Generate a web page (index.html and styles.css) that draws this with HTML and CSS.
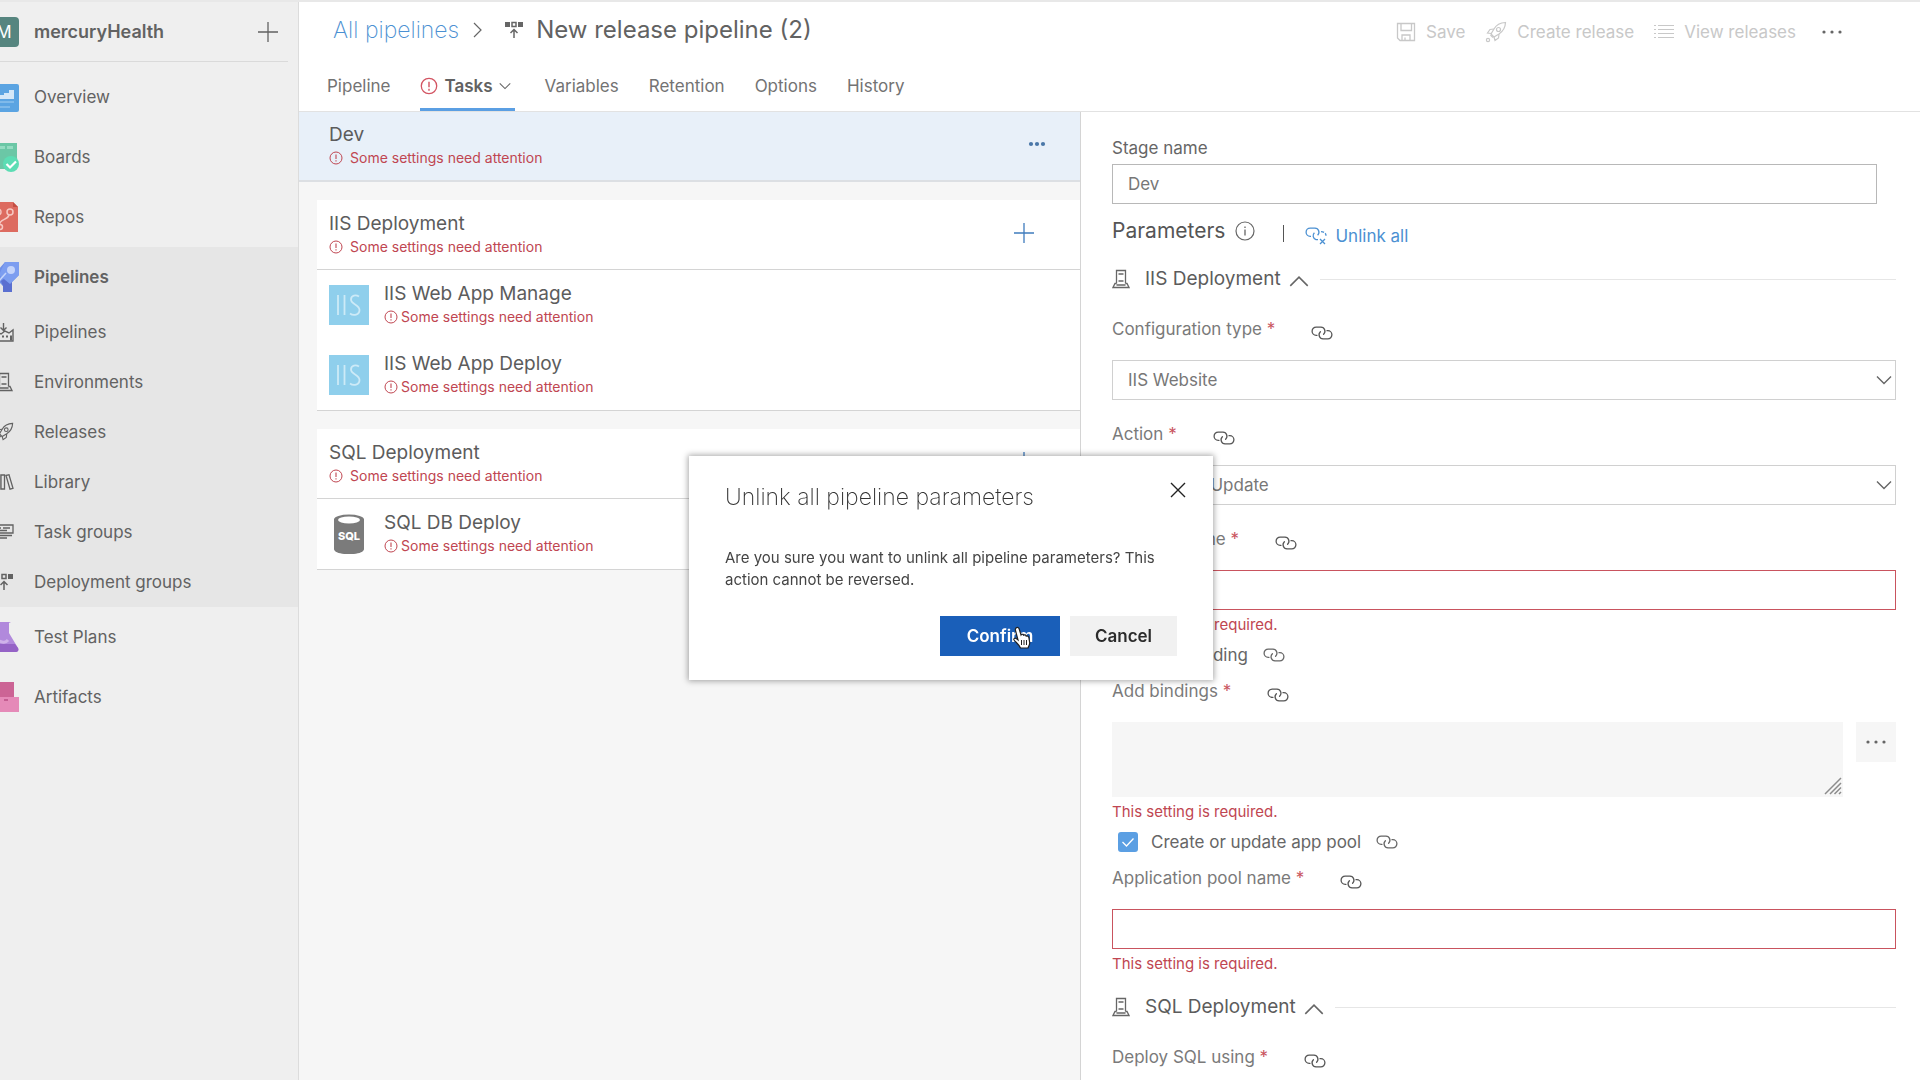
FILE: index.html
```html
<!DOCTYPE html>
<html lang="en">
<head>
<meta charset="utf-8">
<title>New release pipeline (2) - Pipelines</title>
<link rel="stylesheet" href="styles.css">
</head>
<body>
<svg class="defs" aria-hidden="true">
  <symbol id="alert" viewBox="0 0 14 14"><circle cx="7" cy="7" r="6" fill="none" stroke="currentColor"/><path d="M7 3.6v4.4M7 9.2v1.4" stroke="currentColor" stroke-width="1.1"/></symbol>
  <symbol id="link" viewBox="0 0 22 14"><g fill="none" stroke="currentColor" stroke-width="1.3" stroke-linecap="round"><path d="M6 9.3H5.2A4.1 4.1 0 0 1 5.2 1.1H10A4.1 4.1 0 0 1 12.6 8.2"/><path d="M16 4.7h.8a4.1 4.1 0 0 1 0 8.2H12A4.1 4.1 0 0 1 9.4 5.8"/></g></symbol>
  <symbol id="plus" viewBox="0 0 22 22"><path d="M11 1v20M1 11h20" stroke="currentColor" stroke-width="1.3"/></symbol>
  <symbol id="dots" viewBox="0 0 20 6"><circle cx="2" cy="3" r="1.6"/><circle cx="10" cy="3" r="1.6"/><circle cx="18" cy="3" r="1.6"/></symbol>
  <symbol id="dots-bold" viewBox="0 0 18 6"><circle cx="3" cy="3" r="2.1"/><circle cx="9" cy="3" r="2.1"/><circle cx="15" cy="3" r="2.1"/></symbol>
  <symbol id="down" viewBox="0 0 16 10"><path d="M1 1.5l7 7 7-7" fill="none" stroke="currentColor" stroke-width="1.4"/></symbol>
  <symbol id="up" viewBox="0 0 18 11"><path d="M1 10l8-8 8 8" fill="none" stroke="currentColor" stroke-width="1.4"/></symbol>
  <symbol id="server" viewBox="0 0 18 20"><path d="M4.5 14.5v-13h9v13M4.5 14.5H3l-2 4h16l-2-4h-1.5M4.5 16h9M6.5 5h5M6.5 12h5" fill="none" stroke="currentColor" stroke-width="1.3"/></symbol>
  <symbol id="rocket" viewBox="0 0 22 22"><g fill="none" stroke="currentColor" stroke-width="1.2"><path d="M20.5 1.5c-5 .2-9 2-11.5 6.500L6 13l3 3 5-3c4.500-3 6.300-6.500 6.500-11.500z"/><circle cx="13.500" cy="8.500" r="2"/><path d="M9 8L5 8.500 2.500 12 6.500 12.500M14 13l-.5 4L10 19.500 9 16M5.500 14l2.500 2.500"/><circle cx="3" cy="19" r="1.600"/></g></symbol>
  <symbol id="group" viewBox="0 0 20 20"><path d="M1 2h5v5H1zM14 2h5v5h-5z" fill="currentColor"/><path d="M8 2.600h4v3.800H8zM10 18V9.500M6.500 13l3.500-3.500 3.500 3.500" fill="none" stroke="currentColor" stroke-width="1.500"/></symbol>
  <symbol id="iis" viewBox="0 0 40 40"><path fill="#8fcfec" d="M0 0h40v40H0z"/><path d="M9 10v20M15.500 10v20M30 11.500c-3-2-8-1.500-8 3 0 5 8.500 5 8.500 10.500 0 5-6 6-9.500 3.500" fill="none" stroke="#cdeaf7" stroke-width="1.800"/></symbol>
</svg>
<div class="app">
  <nav class="sidebar" aria-label="Project">
    <div class="project">
      <span class="project-badge">M</span>
      <strong>mercuryHealth</strong>
      <button class="icon-button" aria-label="New"><svg width="22" height="22"><use href="#plus"/></svg></button>
    </div>
    <a class="nav-item" href="#"><svg width="30" height="30" viewBox="0 0 30 30"><rect y="2" width="30" height="28" rx="2" fill="#5ba4e2"/><path d="M5 17v-4h10v-2h5V8h5v9z" fill="#d5e8f8"/><path d="M5 20h20M5 25h16" stroke="#a5cff1"/></svg>Overview</a>
    <a class="nav-item" href="#"><svg width="30" height="30" viewBox="0 0 30 30"><path d="M0 1h28v26H0z" fill="#6bc7a6"/><path d="M4 4h5v4H4zM11 4h5v3h-5zM18 4h6v3h-6z" fill="#94dcc2"/><circle cx="22" cy="22" r="8" fill="#5cddb4"/><path d="M17.500 22l3.500 3.500 6-6" fill="none" stroke="#fff" stroke-width="2.200"/></svg>Boards</a>
    <a class="nav-item" href="#"><svg width="30" height="30" viewBox="0 0 30 30"><path d="M0 0h24l5 5v25H0z" fill="#dd6b60"/><path d="M24 0l5 5h-5z" fill="#c44e43"/><g fill="none" stroke="#f6c8c2" stroke-width="1.500"><circle cx="21" cy="10" r="3"/><circle cx="11" cy="25" r="2.500"/><circle cx="9" cy="10" r="3"/><path d="M20 13c-1 5-9 4-9.500 9.500"/></g></svg>Repos</a>
    <div class="nav-group">
      <a class="nav-item current" href="#"><svg width="30" height="30" viewBox="0 0 30 30"><path d="M16 0h14v13l-7 7v10h-9v-6l-8-8H0V8h9z" fill="#6f8fe8"/><path d="M12 19l11-7v18h-9v-6z" fill="#5a6fd0"/><path d="M16 0h14v13l-9 9-11-9z" fill="#7c9df0"/><circle cx="22" cy="8" r="4" fill="#c4d4fb"/><path d="M9 20l8-9" stroke="#c4d4fb" stroke-width="1.500"/></svg>Pipelines</a>
      <a class="nav-item sub" href="#"><svg width="20" height="20" viewBox="0 0 20 20"><path d="M2 10v9h17V8l-4 3-4-2-4 3zM9.500 1v7M6.500 5.500l3 3 3-3" fill="none" stroke="currentColor" stroke-width="1.400"/><path d="M4 13.500h2v2H4zM8 13.500h2v2H8zM12 13.500h2v2h-2zM16 13.500h2v5h-2z" fill="currentColor"/></svg>Pipelines</a>
      <a class="nav-item sub" href="#"><svg width="20" height="20"><use href="#server"/></svg>Environments</a>
      <a class="nav-item sub" href="#"><svg width="20" height="20"><use href="#rocket"/></svg>Releases</a>
      <a class="nav-item sub" href="#"><svg width="20" height="20" viewBox="0 0 20 20"><path d="M2 3h3.500v14H2zM7 3h3.500v14H7zM12 3.500l3-.8 4 13.600-3 .8z" fill="none" stroke="currentColor" stroke-width="1.300"/></svg>Library</a>
      <a class="nav-item sub" href="#"><svg width="20" height="20" viewBox="0 0 20 20"><path d="M1 3h18v8H1zM4 6h3M9 6h7M4 8.500h9M4 13.500h14M4 16h9" fill="none" stroke="currentColor" stroke-width="1.300"/></svg>Task groups</a>
      <a class="nav-item sub" href="#"><svg width="20" height="20"><use href="#group"/></svg>Deployment groups</a>
    </div>
    <a class="nav-item" href="#"><svg width="30" height="30" viewBox="0 0 30 30"><path d="M9 0h13l-2 1v10l9 15c1 2 0 4-2 4H3c-2 0-3-2-2-4l8-15z" fill="#b189dc"/><path d="M4 22h22l3 4c1 2 0 4-2 4H3c-2 0-3-2-2-4z" fill="#9563c6"/><path d="M6 20c5-4 8 4 13-2" fill="none" stroke="#cfb2ea" stroke-width="3"/></svg>Test Plans</a>
    <a class="nav-item" href="#"><svg width="30" height="30" viewBox="0 0 30 30"><path d="M4 0h21v15H4z" fill="#cc6495"/><path d="M0 15h30v15H0z" fill="#e58ab8"/><path d="M15 18h4" stroke="#b84e84" stroke-width="1.500"/></svg>Artifacts</a>
  </nav>
  <div class="main">
    <header class="page-header">
      <div class="title-row">
        <a class="crumb" href="#">All pipelines</a>
        <svg class="crumb-sep" width="10" height="18" viewBox="0 0 10 18"><path d="M1 2l7 7-7 7" fill="none" stroke="currentColor" stroke-width="1.200"/></svg>
        <svg class="title-icon" width="20" height="20"><use href="#group"/></svg>
        <h1>New release pipeline (2)</h1>
        <div class="toolbar">
          <button disabled><svg width="20" height="20" viewBox="0 0 20 20"><path d="M1.500 1.500h17v17H4l-2.500-2.500zM5 1.500v7h10.500v-7M6 18.500V13h8v5.500M9 15.500v3" fill="none" stroke="currentColor" stroke-width="1.300"/></svg>Save</button>
          <button disabled><svg width="22" height="22"><use href="#rocket"/></svg>Create release</button>
          <button disabled><svg width="20" height="16" viewBox="0 0 20 16"><path d="M4 1.500h16M4 5.500h16M4 9.500h16M4 13.500h16M0 1.500h2M0 5.500h2M0 9.500h2M0 13.500h2" stroke="currentColor"/></svg>View releases</button>
          <button class="more" aria-label="More actions"><svg width="20" height="6"><use href="#dots"/></svg></button>
        </div>
      </div>
      <nav class="tabs" aria-label="Pipeline sections">
        <a href="#">Pipeline</a>
        <a class="active" href="#"><svg class="alert" width="18" height="18"><use href="#alert"/></svg>Tasks<svg width="12" height="8"><use href="#down"/></svg></a>
        <a href="#">Variables</a>
        <a href="#">Retention</a>
        <a href="#">Options</a>
        <a href="#">History</a>
      </nav>
    </header>
    <div class="panes">
      <section class="tasks" aria-label="Tasks">
        <div class="stage">
          <div><h2>Dev</h2><p class="warn"><svg width="14" height="14"><use href="#alert"/></svg>Some settings need attention</p></div>
          <button class="icon-button stage-more" aria-label="Stage actions"><svg width="18" height="6"><use href="#dots-bold"/></svg></button>
        </div>
        <div class="card">
          <div class="card-head">
            <div><h2>IIS Deployment</h2><p class="warn"><svg width="14" height="14"><use href="#alert"/></svg>Some settings need attention</p></div>
            <button class="icon-button add" aria-label="Add a task to IIS Deployment"><svg width="22" height="22"><use href="#plus"/></svg></button>
          </div>
          <div class="task"><svg width="40" height="40"><use href="#iis"/></svg><div><h3>IIS Web App Manage</h3><p class="warn tight"><svg width="14" height="14"><use href="#alert"/></svg>Some settings need attention</p></div></div>
          <div class="task"><svg width="40" height="40"><use href="#iis"/></svg><div><h3>IIS Web App Deploy</h3><p class="warn tight"><svg width="14" height="14"><use href="#alert"/></svg>Some settings need attention</p></div></div>
        </div>
        <div class="card">
          <div class="card-head">
            <div><h2>SQL Deployment</h2><p class="warn"><svg width="14" height="14"><use href="#alert"/></svg>Some settings need attention</p></div>
            <button class="icon-button add" aria-label="Add a task to SQL Deployment"><svg width="22" height="22"><use href="#plus"/></svg></button>
          </div>
          <div class="task"><svg width="40" height="40" viewBox="0 0 40 40"><path d="M5 5v30c0 7 30 7 30 0V5z" fill="#7b7b7b"/><ellipse cx="20" cy="5.500" rx="15" ry="5" fill="#7b7b7b"/><ellipse cx="20" cy="6" rx="11" ry="3.400" fill="#fff"/><text x="20" y="26" text-anchor="middle" class="sql-text">SQL</text></svg><div><h3>SQL DB Deploy</h3><p class="warn tight"><svg width="14" height="14"><use href="#alert"/></svg>Some settings need attention</p></div></div>
        </div>
      </section>
      <form class="details">
        <label class="stage-label" for="stage">Stage name</label>
        <input class="control stage-input" id="stage" type="text" value="Dev">
        <div class="params">
          <h2>Parameters</h2>
          <svg width="20" height="20" viewBox="0 0 20 20"><circle cx="10" cy="10" r="9" fill="none" stroke="currentColor" stroke-width="1.200"/><path d="M10 8.500v6M10 5.500v1.500" stroke="currentColor" stroke-width="1.300"/></svg>
          <span class="bar"></span>
          <a class="unlink" href="#"><svg width="22" height="18" viewBox="0 0 22 18"><g fill="none" stroke="currentColor" stroke-width="1.300"><path d="M6 9.300h-.8a4.100 4.100 0 0 1 0-8.200H10a4.100 4.100 0 0 1 2.600 7.100"/><path d="M9.400 5.800A4.100 4.100 0 0 0 11 12.700h2" /><path d="M16 4.700c3 0 5 1.500 5 4" stroke-dasharray="3 1.500"/><path d="M15 12l5 5M20 12l-5 5"/></g></svg>Unlink all</a>
        </div>
        <div class="section"><svg width="18" height="20"><use href="#server"/></svg><h2>IIS Deployment</h2><svg class="up" width="20" height="12"><use href="#up"/></svg><hr></div>
        <div class="field">
          <div class="label"><label for="ctype">Configuration type <b>*</b></label><svg width="22" height="14"><use href="#link"/></svg></div>
          <div class="select"><select class="control" id="ctype"><option>IIS Website</option></select><svg width="16" height="10"><use href="#down"/></svg></div>
        </div>
        <div class="field">
          <div class="label"><label for="action">Action <b>*</b></label><svg width="22" height="14"><use href="#link"/></svg></div>
          <div class="select"><select class="control" id="action"><option>Create Or Update</option></select><svg width="16" height="10"><use href="#down"/></svg></div>
        </div>
        <div class="field">
          <div class="label"><label for="site">Website name <b>*</b></label><svg width="22" height="14"><use href="#link"/></svg></div>
          <input class="control invalid" id="site" type="text">
        </div>
        <p class="error">This setting is required.</p>
        <div class="check"><input type="checkbox" id="addb" checked><label for="addb">Add binding</label><svg width="22" height="14"><use href="#link"/></svg></div>
        <div class="field near">
          <div class="label"><label for="bind">Add bindings <b>*</b></label><svg width="22" height="14"><use href="#link"/></svg></div>
          <div class="area-row">
            <div class="area"><textarea id="bind"></textarea><svg width="18" height="18" viewBox="0 0 18 18"><path d="M1 17L17 1M6 17L17 6M10.500 17l6.500-6.500M15 17l2-2" stroke="#8c8c8c" stroke-width="1.500"/></svg></div>
            <button type="button" class="browse" aria-label="Edit bindings"><svg width="20" height="6"><use href="#dots"/></svg></button>
          </div>
        </div>
        <p class="error">This setting is required.</p>
        <div class="check"><input type="checkbox" id="pool" checked><label for="pool">Create or update app pool</label><svg width="22" height="14"><use href="#link"/></svg></div>
        <div class="field near">
          <div class="label"><label for="poolname">Application pool name <b>*</b></label><svg width="22" height="14"><use href="#link"/></svg></div>
          <input class="control invalid" id="poolname" type="text">
        </div>
        <p class="error">This setting is required.</p>
        <div class="section"><svg width="18" height="20"><use href="#server"/></svg><h2>SQL Deployment</h2><svg class="up" width="20" height="12"><use href="#up"/></svg><hr></div>
        <div class="field">
          <div class="label"><label for="sqlusing">Deploy SQL using <b>*</b></label><svg width="22" height="14"><use href="#link"/></svg></div>
          <div class="select"><select class="control" id="sqlusing"><option>Sql Dacpac File</option></select><svg width="16" height="10"><use href="#down"/></svg></div>
        </div>
      </form>
    </div>
  </div>
</div>
<div class="overlay">
  <div class="dialog" role="dialog" aria-modal="true" aria-labelledby="dlg-title">
    <div class="dialog-head"><h2 id="dlg-title">Unlink all pipeline parameters</h2><button class="icon-button" aria-label="Close"><svg width="16" height="16" viewBox="0 0 16 16"><path d="M1 1l14 14M15 1L1 15" stroke="#222" stroke-width="1.400"/></svg></button></div>
    <p>Are you sure you want to unlink all pipeline parameters? This action cannot be reversed.</p>
    <div class="dialog-actions">
      <button class="primary">Confirm<svg class="pointer" width="20" height="24" viewBox="0 0 20 24"><path d="M4 2c1.500-1.300 2.800-.3 3.200 1L9 9c.5-1 2-1 2.600.2.900-.7 2.200-.3 2.600.9 1.200-.5 2.500.2 2.700 1.600l.8 5c.2 2-1.200 3.300-1.700 5.300H8.500C7.500 19 4 16.500 2 14c-.6-1.300.8-2.400 2-1.600L6 14 3.500 4.500C3.200 3.500 3.300 2.700 4 2z" fill="#fff" stroke="#222" stroke-width="1.200"/><path d="M9.500 14v5M12 14v5M14.500 14v5" stroke="#222"/></svg></button>
      <button class="secondary">Cancel</button>
    </div>
  </div>
</div>
</body>
</html>
```
FILE: styles.css
```css
* { box-sizing: border-box; margin: 0; }
body {
  font: 400 17px/24px Inter, "Noto Sans", sans-serif;
  color: #666;
  background: #fff;
}
button, input, select, textarea { font: inherit; color: inherit; }
button { border: 0; padding: 0; background: none; display: flex; align-items: center; }
a { color: inherit; text-decoration: none; }
svg { flex: none; fill: currentColor; }
h1, h2, h3 { font-weight: 400; }
.defs { position: absolute; width: 0; height: 0; }

.app { display: grid; grid-template-columns: 299px minmax(0, 1fr); height: 100vh; overflow: hidden; border-top: 2px solid #e8e8e8; }

/* sidebar */
.sidebar { background: #efefef; border-right: 1px solid #dcdcdc; overflow: hidden; color: #626262; }
.project { display: flex; align-items: center; height: 60px; margin: 0 10px 5px 0; padding-right: 9px; border-bottom: 1px solid #dadada; }
.project-badge { width: 30px; height: 30px; margin: 0 15px 0 -11px; border-radius: 4px; background: #56857f; color: #fff; line-height: 30px; text-align: center; }
.project strong { flex: 1; font-size: 18px; font-weight: 600; }
.nav-item { display: flex; align-items: center; gap: 15px; height: 60px; margin-left: -11px; }
.nav-item.sub { height: 50px; gap: 20px; margin-left: -6px; }
.nav-item.current { font-weight: 600; }
.nav-group { background: #e6e6e6; }

/* header */
.main { display: flex; flex-direction: column; min-width: 0; min-height: 0; }
.page-header { flex: none; border-bottom: 1px solid #e2e2e2; }
.title-row { display: flex; align-items: center; height: 56px; padding: 0 78px 0 34px; }
.crumb { font-size: 23px; font-weight: 200; color: #4b90d2; }
.crumb-sep { margin: 0 21px 0 14px; }
.title-icon { margin-right: 12px; }
h1 { font-size: 24px; color: #626262; }
.toolbar { display: flex; gap: 20px; margin-left: auto; padding-top: 4px; }
.toolbar button { gap: 10px; color: #c8c8c8; }
.toolbar .more { color: #666; margin-left: 6px; }
.tabs { display: flex; gap: 30px; height: 53px; padding-left: 28px; color: #737373; }
.tabs a { display: flex; align-items: center; padding-top: 6px; border-bottom: 3px solid transparent; }
.tabs .active { gap: 6px; padding-right: 4px; font-weight: 600; color: #626262; border-color: #5b9fe3; }
.alert { color: #d35563; }

/* task list */
.panes { flex: 1; display: grid; grid-template-columns: 782fr 839fr; min-height: 0; }
.tasks { background: #f6f6f6; border-right: 1px solid #d4d4d4; }
.tasks h2, .tasks h3 { font-size: 19px; line-height: 24px; color: #5c5c5c; }
.stage { display: flex; align-items: center; justify-content: space-between; height: 70px; padding: 0 34px 0 30px; background: #e8f0f9; border-bottom: 2px solid #dcdfe3; }
.stage-more { color: #4a77a8; padding-bottom: 4px; }
.card { margin: 18px 0 0 18px; background: #fff; }
.card-head, .task { display: flex; align-items: center; height: 70px; padding-left: 12px; }
.card-head { justify-content: space-between; padding-right: 45px; border-bottom: 1px solid #d4d4d4; }
.task { gap: 15px; }
.task:last-child { height: 71px; border-bottom: 1px solid #d4d4d4; }
.add { color: #3f7cbd; padding-bottom: 4px; }
.warn { display: flex; align-items: center; gap: 7px; font-size: 14px; line-height: 22px; color: #c04651; }
.warn.tight { gap: 3px; }
.sql-text { font-size: 11px; font-weight: 800; fill: #fff; }

/* details form */
.details { padding: 24px 24px 0 31px; overflow: hidden; }
.stage-label { display: block; margin-bottom: 4px; }
.control { display: block; width: 100%; height: 40px; padding: 0 15px; border: 1px solid #d0d0d0; background: #fff; color: #777; appearance: none; border-radius: 0; }
.stage-input { width: calc(100% - 19px); border-color: #b8b8b8; }
.invalid { border-color: #c9545e; }
.params { display: flex; align-items: center; height: 37px; margin: 8px 0 12px; }
.params h2 { font-size: 21px; color: #555; margin-right: 10px; }
.bar { width: 1px; height: 17px; margin: 6px 21px 0 28px; background: #555; }
.unlink { display: flex; align-items: center; gap: 8px; padding-top: 10px; color: #4b90d2; }
.section { display: flex; align-items: center; height: 36px; margin-bottom: 16px; }
.error + .section { margin-top: 10px; }
.section h2 { font-size: 19px; color: #5c5c5c; margin: 0 8px 0 15px; }
.section .up { margin-top: 4px; }
.section hr { flex: 1; margin-left: 11px; border: 0; border-top: 1px solid #e6e6e6; }
.field + .field { margin-top: 18px; }
.near { margin-top: 6px; }
.label { display: flex; align-items: center; gap: 36px; height: 31px; margin-bottom: 16px; color: #7a7a7a; }
.label b { font-weight: 400; color: #c9545e; }
.label svg { margin-top: 8px; color: #555; }
.select { position: relative; }
.select svg { position: absolute; right: 4px; top: 15px; }
.error { height: 30px; font-size: 15px; line-height: 30px; color: #c04651; }
.check { display: flex; align-items: center; height: 29px; padding-left: 6px; }
.check input { appearance: none; width: 20px; height: 20px; margin: 0 13px 0 0; border-radius: 3px; background: #5b9fe3 url("data:image/svg+xml,%3Csvg xmlns='http://www.w3.org/2000/svg' viewBox='0 0 20 20'%3E%3Cpath d='M4.500 10l4 4 7-7.500' fill='none' stroke='%23fff' stroke-width='1.300'/%3E%3C/svg%3E"); }
.check svg { margin-left: 15px; }
.area-row { display: flex; align-items: flex-start; gap: 13px; }
.area { position: relative; flex: 1; }
.area textarea { display: block; width: 100%; height: 75px; border: 0; background: #f6f6f6; resize: none; }
.area svg { position: absolute; right: 1px; bottom: 2px; }
.browse { width: 40px; height: 40px; justify-content: center; background: #f6f6f6; }

/* dialog */
.overlay { position: fixed; inset: 0; display: grid; place-items: center; padding: 55px 18px 0 0; }
.dialog { width: 524px; padding: 24px 36px; background: #fff; color: #444; box-shadow: 0 0 6px 1px rgba(0, 0, 0, .35); }
.dialog-head { display: flex; justify-content: space-between; height: 36px; margin-right: -9px; }
.dialog-head h2 { font-size: 23px; line-height: 34px; font-weight: 200; color: #333; }
.dialog-head .icon-button { height: 20px; }
.dialog p { margin: 31px 0 25px; font-size: 15px; line-height: 22px; }
.dialog-actions { display: flex; gap: 10px; justify-content: flex-end; }
.dialog-actions button { height: 40px; justify-content: center; font-weight: 600; }
.primary { position: relative; width: 120px; background: #1a5fb9; color: #fff; }
.pointer { position: absolute; left: 72px; top: 10px; }
.secondary { width: 107px; background: #f1f1f1; color: #2b2b2b; }
```
